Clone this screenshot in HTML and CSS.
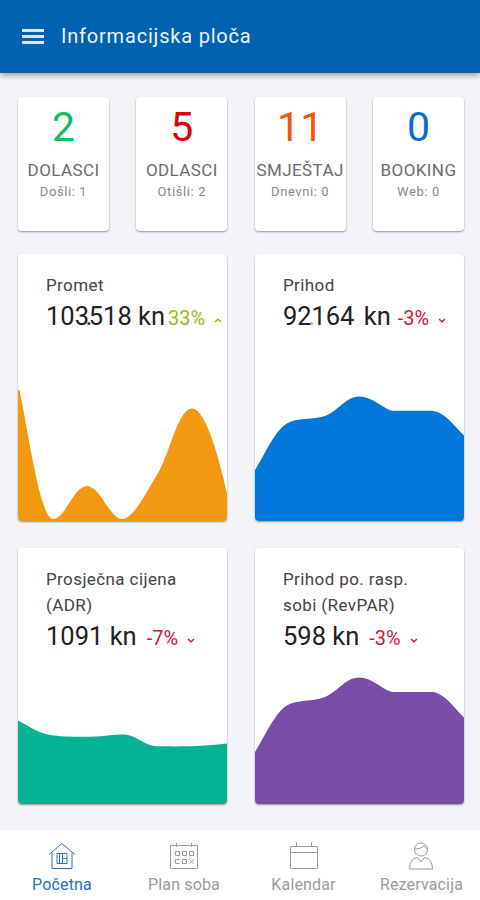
FILE: index.html
```
<!DOCTYPE html>
<html lang="hr">
<head>
    <meta charset="UTF-8">
    <meta name="viewport" content="width=device-width, initial-scale=1.0">
    <title>Informacijska ploča</title>
    <link rel="stylesheet" href="styles.css">
</head>
<body>
    <header class="app-header">
        <button class="menu-button" aria-label="Menu">
            <span></span>
            <span></span>
            <span></span>
        </button>
        <h1>Informacijska ploča</h1>
    </header>

    <main class="dashboard">
        <!-- Daily counters -->
        <section class="stats">
            <div class="card stat">
                <span class="stat-number green">2</span>
                <span class="stat-label">DOLASCI</span>
                <span class="stat-note">Došli: 1</span>
            </div>
            <div class="card stat">
                <span class="stat-number red">5</span>
                <span class="stat-label">ODLASCI</span>
                <span class="stat-note">Otišli: 2</span>
            </div>
            <div class="card stat">
                <span class="stat-number orange">11</span>
                <span class="stat-label">SMJEŠTAJ</span>
                <span class="stat-note">Dnevni: 0</span>
            </div>
            <div class="card stat">
                <span class="stat-number blue">0</span>
                <span class="stat-label">BOOKING</span>
                <span class="stat-note">Web: 0</span>
            </div>
        </section>

        <!-- Charts -->
        <section class="charts">
            <div class="card chart-card">
                <h2>Promet</h2>
                <div class="value-row tight">
                    <span class="value">103<span class="dot">.</span>518 kn</span>
                    <span class="change up">33%</span>
                    <svg class="arrow up" viewBox="0 0 8 5"><path d="M1 4 L4 1.3 L7 4"/></svg>
                </div>
                <svg class="chart" viewBox="0 0 209 151" preserveAspectRatio="none">
                    <path fill="#f29811" d="M0 20 H1.5 C10 60 22 149 35 149 C47 149 56 116 69 116 C82 116 92 149 104 149 C116 149 130 119 140 103 C152 83 160 38.5 174 38.5 C188 38.5 201 89 209 123 V151 H0 Z"/>
                </svg>
            </div>
            <div class="card chart-card">
                <h2>Prihod</h2>
                <div class="value-row wide">
                    <span class="value">92<span class="dot faint">.</span>164 kn</span>
                    <span class="change down">-3%</span>
                    <svg class="arrow down" viewBox="0 0 8 5"><path d="M1 1 L4 3.7 L7 1"/></svg>
                </div>
                <svg class="chart" viewBox="0 0 209 151" preserveAspectRatio="none">
                    <path fill="#0078d9" d="M0 100 C9 86 19 62 31 54 C42 47 58 50 70 46 C82 42 91 26.5 104 26.5 C117 26.5 126 37 136 40.5 C140 41.2 170 40.5 177 40.8 C190 42 200 57 209 65.5 V151 H0 Z"/>
                </svg>
            </div>
            <div class="card chart-card">
                <h2>Prosječna cijena (ADR)</h2>
                <div class="value-row">
                    <span class="value">1091 kn</span>
                    <span class="change down">-7%</span>
                    <svg class="arrow down" viewBox="0 0 8 5"><path d="M1 1 L4 3.7 L7 1"/></svg>
                </div>
                <svg class="chart" viewBox="0 0 209 151" preserveAspectRatio="none">
                    <path fill="#04b294" d="M0 67.5 C9 72 20 80 32 82 C45 84 65 84 79 83.5 C90 83 101 80.5 110 82 C119 84 127 91.5 136 93 C148 93.5 166 93.5 179 93 C190 92.5 200 91.5 209 90.5 V151 H0 Z"/>
                </svg>
            </div>
            <div class="card chart-card">
                <h2>Prihod po. rasp. sobi (RevPAR)</h2>
                <div class="value-row">
                    <span class="value">598 kn</span>
                    <span class="change down">-3%</span>
                    <svg class="arrow down" viewBox="0 0 8 5"><path d="M1 1 L4 3.7 L7 1"/></svg>
                </div>
                <svg class="chart" viewBox="0 0 209 151" preserveAspectRatio="none">
                    <path fill="#774da8" d="M0 99 C9 85 19 61 31 53 C42 46 58 49 70 44 C82 39 91 24.5 104 24.5 C117 24.5 126 35.5 136 38.7 C140 39.4 170 38.7 177 39 C190 40 200 56 209 64.5 V151 H0 Z"/>
                </svg>
            </div>
        </section>
    </main>

    <nav class="bottom-nav">
        <a href="#" class="nav-item active">
            <svg viewBox="0 0 28 28">
                <path d="M1 12.5 L14 1.5 L27 12.5 M4 10.5 V26.5 H24 V10.5"/>
                <path d="M9 11.5 H19 V21.5 H9 Z M11.5 11.5 V21.5 M14.5 11.5 V21.5 M14.5 16.5 H19"/>
            </svg>
            <span>Početna</span>
        </a>
        <a href="#" class="nav-item">
            <svg viewBox="0 0 28 28">
                <path d="M.5 3.5 H27.5 V26.5 H.5 Z M6.5 1 V5 M21.5 1 V5"/>
                <path d="M5.5 9.5 H9.5 V13.5 H5.5 Z M12.5 9.5 H16.5 V13.5 H12.5 Z M19.5 9.5 H23.5 V13.5 H19.5 Z M9.5 17.5 H5.5 V21.5 H9.5 M12.5 17.5 H16.5 V21.5 H12.5 Z M19.5 17.5 L23.5 21.5 M23.5 17.5 L19.5 21.5"/>
            </svg>
            <span>Plan soba</span>
        </a>
        <a href="#" class="nav-item">
            <svg viewBox="0 0 28 28">
                <path d="M.5 4.5 H27.5 V26.5 H.5 Z M.5 10.5 H27.5 M6.5 .5 V5 M21.5 .5 V5"/>
            </svg>
            <span>Kalendar</span>
        </a>
        <a href="#" class="nav-item">
            <svg viewBox="0 0 28 28">
                <circle cx="13" cy="7.5" r="6.5"/>
                <path d="M7 7 C11 7 14 6 16 3.5 C17 5.5 18 6.5 19.5 7"/>
                <path d="M9.5 15.5 C4 16.5 2 20 1.5 27 H24.5 C24 20 22 16.5 16.5 15.5 L13 20 Z"/>
            </svg>
            <span>Rezervacija</span>
        </a>
    </nav>
</body>
</html>
```
FILE: styles.css
```
* {
    box-sizing: border-box;
}

body {
    margin: 0;
    height: 900px;
    display: flex;
    flex-direction: column;
    font-family: Roboto, sans-serif;
    background-color: #f3f4f7;
    color: #222;
}

/* Header */
.app-header {
    height: 73px;
    flex-shrink: 0;
    display: flex;
    align-items: center;
    gap: 17px;
    padding: 0 22px 2px;
    background-color: #0062b1;
    box-shadow: 0 2px 6px rgba(0, 0, 0, 0.4);
}

.menu-button {
    display: flex;
    flex-direction: column;
    gap: 3px;
    width: 22px;
    padding: 2px 0 0;
    border: none;
    background: none;
}

.menu-button span {
    height: 3px;
    background-color: #d9e8f7;
}

h1 {
    margin: 0;
    font-size: 20px;
    font-weight: 400;
    letter-spacing: 0.8px;
    color: #e9f3fd;
}

.dashboard {
    flex: 1;
    padding: 24px 16px 0 18px;
}

.card {
    background-color: #fff;
    border-radius: 4px;
    box-shadow: 0 1px 2px rgba(0, 0, 0, 0.4);
}

/* Counters */
.stats {
    display: grid;
    grid-template-columns: repeat(4, 91px);
    justify-content: space-between;
    margin-bottom: 23px;
}

.stat {
    height: 134px;
    display: flex;
    flex-direction: column;
    align-items: center;
    padding-top: 6px;
    white-space: nowrap;
}

.stat-number {
    font-size: 41px;
    line-height: 48px;
}

.stat-label {
    margin-top: 9px;
    font-size: 17px;
    line-height: 20px;
    letter-spacing: 0.4px;
    color: #6c6c6c;
}

.stat-note {
    margin-top: 4px;
    font-size: 13px;
    line-height: 16px;
    letter-spacing: 0.6px;
    color: #8a8a8a;
}

.green {
    color: #08bf61;
}

.red {
    color: #d9000d;
}

.orange {
    color: #f4540d;
}

.blue {
    color: #096dd0;
}

/* Chart cards */
.charts {
    display: grid;
    grid-template-columns: 209px 209px;
    grid-template-rows: 267px 256px;
    justify-content: space-between;
    row-gap: 27px;
}

.chart-card {
    display: flex;
    flex-direction: column;
    padding-top: 18px;
    overflow: hidden;
}

h2 {
    width: 150px;
    margin: 0 0 0 28px;
    font-size: 17px;
    line-height: 26px;
    font-weight: 400;
    letter-spacing: 0.4px;
    color: #444;
}

.value-row {
    display: flex;
    align-items: baseline;
    height: 34px;
    margin-left: 28px;
    line-height: 36px;
    white-space: nowrap;
}

.value {
    font-size: 25.5px;
}

.wide .value {
    word-spacing: 3px;
}

.dot {
    margin: 0 -3.5px;
}

.dot.faint {
    color: #aaa;
}

.change {
    margin-left: 10px;
    font-size: 20px;
}

.tight .change {
    margin-left: 3px;
}

.wide .change {
    margin-left: 7px;
}

.change.up {
    color: #92bf10;
}

.change.down {
    color: #d3153c;
}

.arrow {
    width: 8px;
    height: 5px;
    margin-left: 9px;
    position: relative;
    top: -2px;
    fill: none;
    stroke-width: 1.5;
}

.arrow.up {
    stroke: #92bf10;
}

.arrow.down {
    stroke: #d3153c;
}

.chart {
    display: block;
    width: 100%;
    height: 151px;
    margin-top: auto;
    flex-shrink: 0;
}

/* Bottom navigation */
.bottom-nav {
    height: 70px;
    display: grid;
    grid-template-columns: 124px 120px 119px 117px;
    background-color: #fff;
}

.nav-item {
    display: flex;
    flex-direction: column;
    align-items: center;
    padding-top: 12px;
    font-size: 16px;
    line-height: 22px;
    letter-spacing: 0.15px;
    text-decoration: none;
    color: #9b9b9b;
}

.nav-item svg {
    width: 28px;
    height: 28px;
    margin-bottom: 4px;
    fill: none;
    stroke: currentColor;
    stroke-width: 1;
}

.nav-item.active {
    color: #2673bf;
}
```
